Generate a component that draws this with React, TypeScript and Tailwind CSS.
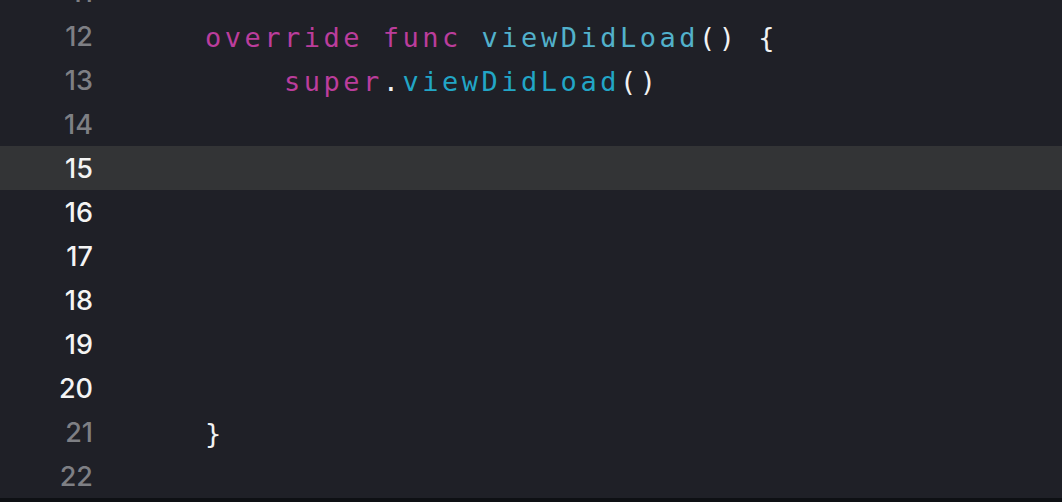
import React from "react";

type Tok = { t: string; c: string };

const PINK = "text-[#bb3d9c]";
const CYAN1 = "text-[#52b1cb]";
const CYAN2 = "text-[#22a6c6]";
const WHITE = "text-[#f2f2f2]";

const lines: { n: number; bright: boolean; active?: boolean; toks: Tok[] }[] = [
  { n: 11, bright: false, toks: [] },
  {
    n: 12,
    bright: false,
    toks: [
      { t: "override", c: PINK },
      { t: " ", c: WHITE },
      { t: "func", c: PINK },
      { t: " ", c: WHITE },
      { t: "viewDidLoad", c: CYAN1 },
      { t: "() {", c: WHITE },
    ],
  },
  {
    n: 13,
    bright: false,
    toks: [
      { t: "    ", c: WHITE },
      { t: "super", c: PINK },
      { t: ".", c: WHITE },
      { t: "viewDidLoad", c: CYAN2 },
      { t: "()", c: WHITE },
    ],
  },
  { n: 14, bright: false, toks: [] },
  { n: 15, bright: true, active: true, toks: [] },
  { n: 16, bright: true, toks: [] },
  { n: 17, bright: true, toks: [] },
  { n: 18, bright: true, toks: [] },
  { n: 19, bright: true, toks: [] },
  { n: 20, bright: true, toks: [] },
  { n: 21, bright: false, toks: [{ t: "}", c: WHITE }] },
  { n: 22, bright: false, toks: [] },
];

export default function App() {
  return (
    <div className="w-[1062px] h-[502px] bg-[#0e1014] overflow-hidden flex flex-col">
      <div className="h-[498px] bg-[#1f2027] overflow-hidden">
        <div className="-mt-[30px] flex flex-col">
          {lines.map((l) => (
            <div
              key={l.n}
              className={`h-[44px] flex items-center ${l.active ? "bg-[#333436]" : ""}`}
            >
              <div
                className={`w-[93px] pt-[1px] text-right text-[27px] font-medium leading-[44px] ${
                  l.bright ? "text-[#f4f4f4]" : "text-[#7e7f84]"
                }`}
                style={{ fontFamily: "Inter, 'Noto Sans', sans-serif" }}
              >
                {l.n}
              </div>
              <div
                className="pl-[112px] pt-[3px] text-[27px] leading-[44px] tracking-[3.5px] whitespace-pre"
                style={{ fontFamily: "'DejaVu Sans Mono', monospace" }}
              >
                {l.toks.map((tk, i) => (
                  <span key={i} className={tk.c}>
                    {tk.t}
                  </span>
                ))}
              </div>
            </div>
          ))}
        </div>
      </div>
    </div>
  );
}
